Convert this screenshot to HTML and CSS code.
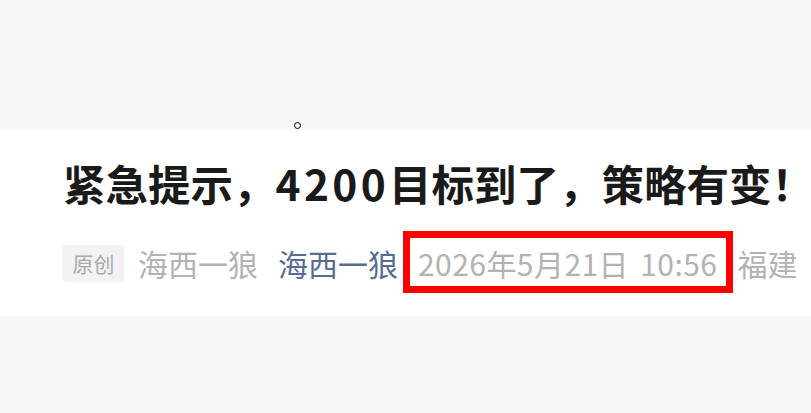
FILE: index.html
```html
<!DOCTYPE html>
<html lang="zh-CN">
<head>
<meta charset="utf-8">
<title>紧急提示，4200目标到了，策略有变！</title>
<link rel="stylesheet" href="styles.css">
</head>
<body>
<div class="page">
  <div class="spacer"></div>
  <div class="article">
    <h1 class="title">紧急提示，<span class="num">4200</span>目标到了，策略有变！</h1>
    <div class="meta">
      <span class="tag">原创</span>
      <span class="author">海西一狼</span>
      <span class="account">海西一狼</span>
      <span class="date">2026年5月21日 10:56</span>
      <span class="region">福建</span>
    </div>
  </div>
  <div class="cursor"></div>
</div>
</body>
</html>
```
FILE: styles.css
```css
html, body {
  margin: 0;
  padding: 0;
  background: #f7f7f7;
  font-family: "Noto Sans CJK SC", "Noto Sans", sans-serif;
}
.page {
  position: relative;
  width: 811px;
  height: 413px;
  overflow: hidden;
}
.spacer {
  height: 130px;
}
.article {
  background: #fff;
  height: 186px;
  box-sizing: border-box;
  padding: 25px 0 0 63px;
  white-space: nowrap;
}
.title {
  margin: 0;
  font-size: 42.5px;
  line-height: 56px;
  font-weight: 700;
  color: #1a1a1a;
}
.title .num {
  letter-spacing: 3.3px;
}
.meta {
  margin-top: 34px;
  display: flex;
  align-items: center;
  height: 37px;
  font-size: 30px;
  line-height: 37px;
  color: #b2b2b2;
}
.tag {
  font-size: 21px;
  line-height: 37px;
  padding: 0 9.5px;
  background: #f2f2f2;
  border-radius: 3px;
  color: #aaa;
  margin-right: 14px;
}
.author {
  margin-right: 20px;
}
.account {
  color: #576b95;
  margin-right: 20px;
}
.date {
  position: relative;
  margin-right: 20px;
  letter-spacing: 0.45px;
  word-spacing: 4px;
}
.date::after {
  content: "";
  position: absolute;
  left: -15px;
  right: -15.5px;
  top: -14px;
  bottom: -11px;
  border: 7px solid #ff0000;
}
.cursor {
  position: absolute;
  left: 293.5px;
  top: 122px;
  width: 7px;
  height: 7px;
  box-sizing: border-box;
  border: 1.5px solid #000;
  border-radius: 50%;
}
```
